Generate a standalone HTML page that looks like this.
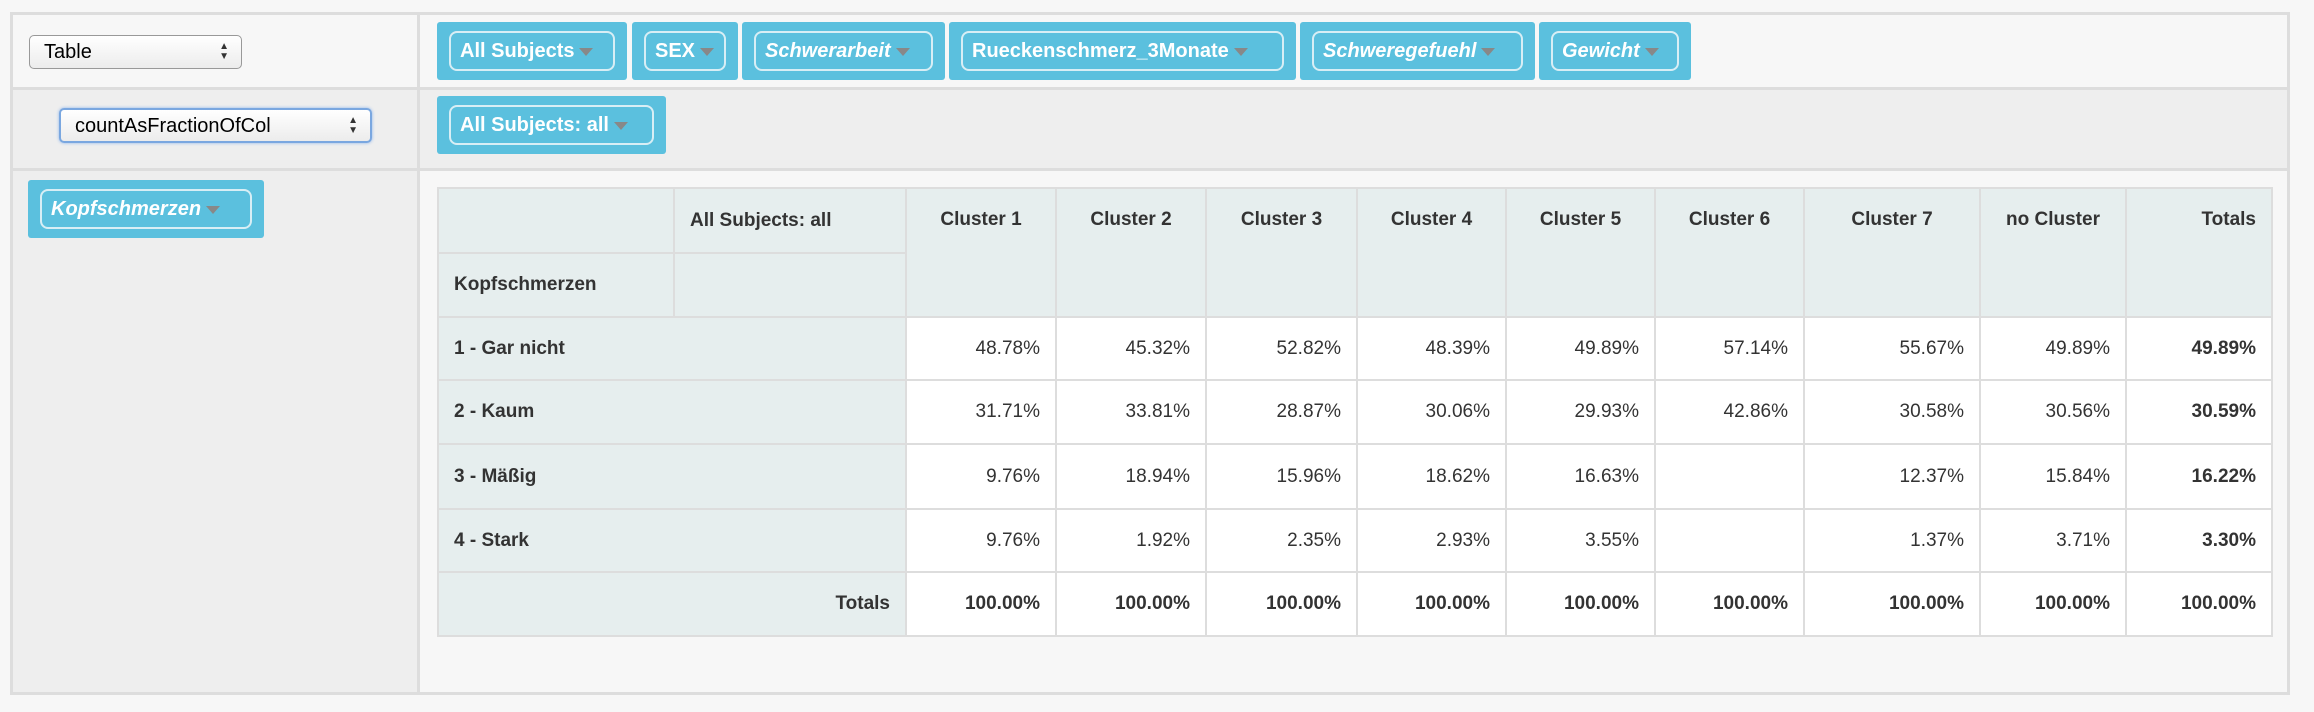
<!DOCTYPE html>
<html><head><meta charset="utf-8"><style>
body{margin:0;width:2314px;height:712px;background:#f7f7f7;font-family:"Liberation Sans",Arial,sans-serif;position:relative;overflow:hidden}
.a{position:absolute;box-sizing:border-box}
.pill{position:absolute;background:#5bc0de;border-radius:3px;box-sizing:border-box;height:58px;top:22px}
.pill span{position:absolute;left:12px;right:12px;top:9px;bottom:9px;border:2px solid #d8eef5;border-radius:8px;color:#fff;font-weight:bold;font-size:20px;line-height:36px;padding-left:9px;white-space:nowrap;box-sizing:border-box}
.pill i{font-style:italic}
.car{display:inline-block;width:0;height:0;border-left:7px solid transparent;border-right:7px solid transparent;border-top:8px solid #888;margin-left:5px;vertical-align:middle}
.sel{position:absolute;box-sizing:border-box;border:1px solid #999;border-radius:5px;background:linear-gradient(#fff,#ececec);font-size:20px;padding-left:14px;line-height:32px}
.arr{position:absolute;right:12px;top:6px;font-size:10px;line-height:10px;color:#333}
table{position:absolute;left:437px;top:187px;border-collapse:collapse;table-layout:fixed;font-size:19px;color:#333}
td{border:2px solid #ddd;padding:0 15px;white-space:nowrap;overflow:hidden}
.h{background:#e6eeee;font-weight:bold}
.n{background:#fff;text-align:right}
.b{font-weight:bold}
</style></head><body>
<div class="a" style="left:10px;top:12px;width:2280px;height:683px;border:3px solid #ddd;background:#f7f7f7"></div>
<div class="a" style="left:13px;top:87px;width:2274px;height:84px;background:#eee;border-top:3px solid #ddd;border-bottom:3px solid #ddd"></div>
<div class="a" style="left:13px;top:171px;width:405px;height:521px;background:#eee"></div>
<div class="a" style="left:417px;top:15px;width:3px;height:677px;background:#ddd"></div>

<div class="sel" style="left:29px;top:35px;width:213px;height:34px">Table<div class="arr">▲<br>▼</div></div>
<div class="sel" style="left:59px;top:108px;width:313px;height:35px;border:2px solid #7aa7e0;box-shadow:0 0 3px #8bb4ec">countAsFractionOfCol<div class="arr">▲<br>▼</div></div>

<div class="pill" style="left:437px;width:190px"><span>All Subjects<b class="car"></b></span></div>
<div class="pill" style="left:632px;width:106px"><span>SEX<b class="car"></b></span></div>
<div class="pill" style="left:742px;width:203px"><span><i>Schwerarbeit</i><b class="car"></b></span></div>
<div class="pill" style="left:949px;width:347px"><span>Rueckenschmerz_3Monate<b class="car"></b></span></div>
<div class="pill" style="left:1300px;width:235px"><span><i>Schweregefuehl</i><b class="car"></b></span></div>
<div class="pill" style="left:1539px;width:152px"><span><i>Gewicht</i><b class="car"></b></span></div>
<div class="pill" style="left:437px;top:96px;width:229px"><span>All Subjects: all<b class="car"></b></span></div>
<div class="pill" style="left:28px;top:180px;width:236px"><span><i>Kopfschmerzen</i><b class="car"></b></span></div>

<table>
<colgroup><col style="width:236px"><col style="width:232px"><col style="width:150px"><col style="width:150px"><col style="width:151px"><col style="width:149px"><col style="width:149px"><col style="width:149px"><col style="width:176px"><col style="width:146px"><col style="width:146px"></colgroup>
<tr style="height:65px"><td class="h"></td><td class="h">All Subjects: all</td>
<td class="h" rowspan="2" style="vertical-align:top;padding-top:20px;text-align:center">Cluster 1</td>
<td class="h" rowspan="2" style="vertical-align:top;padding-top:20px;text-align:center">Cluster 2</td>
<td class="h" rowspan="2" style="vertical-align:top;padding-top:20px;text-align:center">Cluster 3</td>
<td class="h" rowspan="2" style="vertical-align:top;padding-top:20px;text-align:center">Cluster 4</td>
<td class="h" rowspan="2" style="vertical-align:top;padding-top:20px;text-align:center">Cluster 5</td>
<td class="h" rowspan="2" style="vertical-align:top;padding-top:20px;text-align:center">Cluster 6</td>
<td class="h" rowspan="2" style="vertical-align:top;padding-top:20px;text-align:center">Cluster 7</td>
<td class="h" rowspan="2" style="vertical-align:top;padding-top:20px;text-align:center">no Cluster</td>
<td class="h" rowspan="2" style="vertical-align:top;padding-top:20px;text-align:right">Totals</td></tr>
<tr style="height:64px"><td class="h">Kopfschmerzen</td><td class="h"></td></tr>
<tr style="height:63px"><td class="h" colspan="2">1 - Gar nicht</td><td class="n">48.78%</td><td class="n">45.32%</td><td class="n">52.82%</td><td class="n">48.39%</td><td class="n">49.89%</td><td class="n">57.14%</td><td class="n">55.67%</td><td class="n">49.89%</td><td class="n b">49.89%</td></tr>
<tr style="height:64px"><td class="h" colspan="2">2 - Kaum</td><td class="n">31.71%</td><td class="n">33.81%</td><td class="n">28.87%</td><td class="n">30.06%</td><td class="n">29.93%</td><td class="n">42.86%</td><td class="n">30.58%</td><td class="n">30.56%</td><td class="n b">30.59%</td></tr>
<tr style="height:65px"><td class="h" colspan="2">3 - Mäßig</td><td class="n">9.76%</td><td class="n">18.94%</td><td class="n">15.96%</td><td class="n">18.62%</td><td class="n">16.63%</td><td class="n"></td><td class="n">12.37%</td><td class="n">15.84%</td><td class="n b">16.22%</td></tr>
<tr style="height:63px"><td class="h" colspan="2">4 - Stark</td><td class="n">9.76%</td><td class="n">1.92%</td><td class="n">2.35%</td><td class="n">2.93%</td><td class="n">3.55%</td><td class="n"></td><td class="n">1.37%</td><td class="n">3.71%</td><td class="n b">3.30%</td></tr>
<tr style="height:64px"><td class="h" colspan="2" style="text-align:right">Totals</td><td class="n b">100.00%</td><td class="n b">100.00%</td><td class="n b">100.00%</td><td class="n b">100.00%</td><td class="n b">100.00%</td><td class="n b">100.00%</td><td class="n b">100.00%</td><td class="n b">100.00%</td><td class="n b">100.00%</td></tr>
</table>
</body></html>
